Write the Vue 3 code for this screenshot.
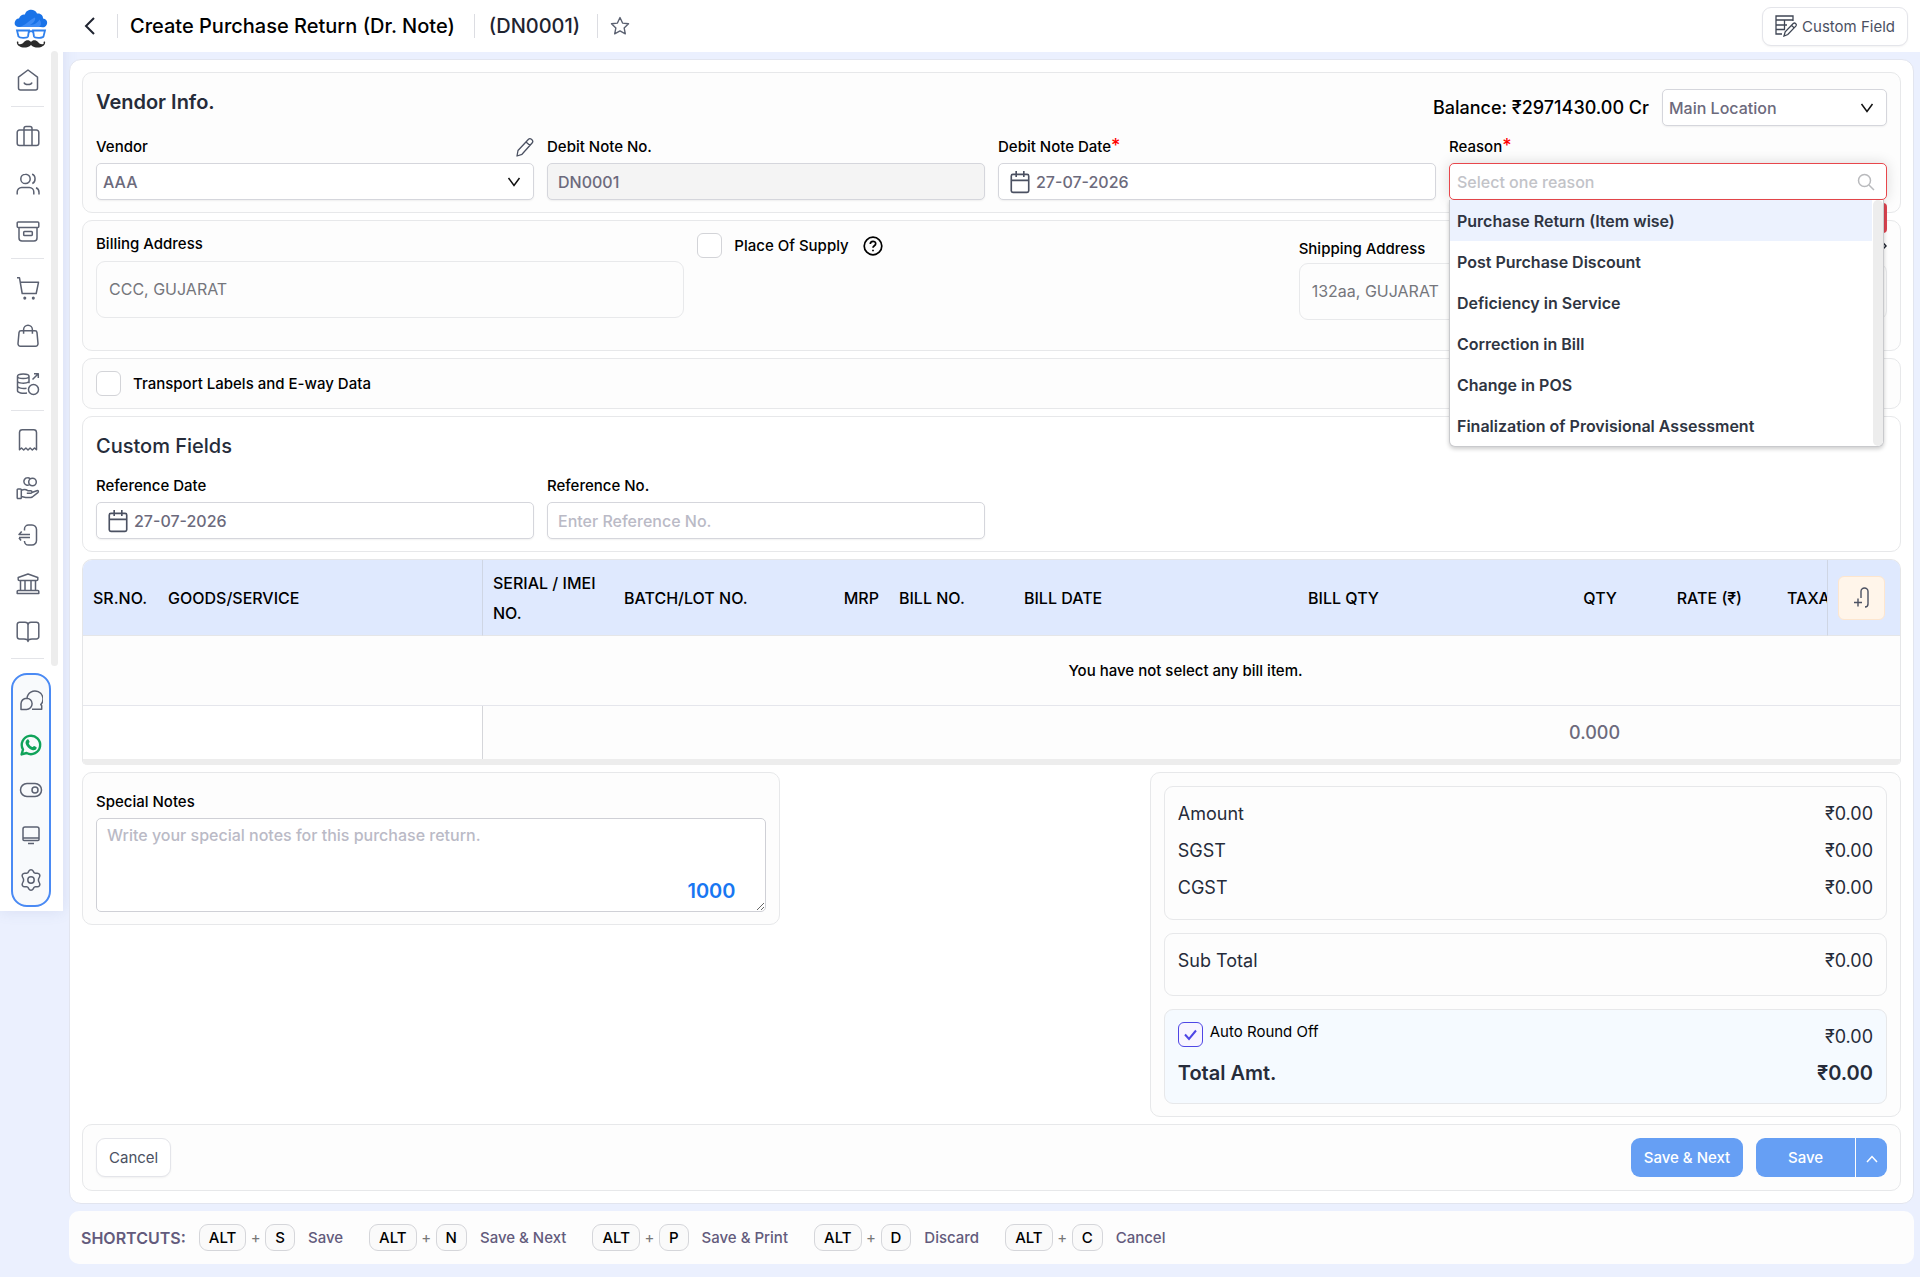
<script setup>
import { ref } from 'vue'

const navGroups = [
  [{ name: 'Home', d: 'M2.5 9.2 12 2l9.5 7.2V20a2 2 0 0 1-2 2h-15a2 2 0 0 1-2-2zM8 14.5c1 2.8 7 2.8 8 0' }],
  [
    { name: 'Products', d: 'M3.5 6h17a2.3 2.3 0 0 1 2.3 2.3v10.9a2.3 2.3 0 0 1-2.3 2.3h-17a2.3 2.3 0 0 1-2.3-2.3V8.3A2.3 2.3 0 0 1 3.5 6zM8 21.5V4.5a2 2 0 0 1 2-2h4a2 2 0 0 1 2 2v17' },
    { name: 'Contacts', d: 'M9.5 2.2a4.7 4.7 0 1 1 0 9.4 4.7 4.7 0 0 1 0-9.4M16 2.3c4 .8 4 8 .3 9.2M1.2 22.5v-2.5a4.5 4.5 0 0 1 4.5-4.5h7.6a4.5 4.5 0 0 1 4.5 4.5v2.5M20 15.8c2 .8 3 2.4 3 4.7v2' },
    { name: 'Inventory', d: 'M2.2 2h19.6a1 1 0 0 1 1 1v3.5a1 1 0 0 1-1 1H2.2a1 1 0 0 1-1-1V3a1 1 0 0 1 1-1zM3 7.5V18a3 3 0 0 0 3 3h12a3 3 0 0 0 3-3V7.5M8.5 11.5h7a.8.8 0 0 1 .8.8v2.4a.8.8 0 0 1-.8.8h-7a.8.8 0 0 1-.8-.8v-2.4a.8.8 0 0 1 .8-.8z' },
  ],
  [
    { name: 'Sales', d: 'M1 1.8h2.5L6.2 17.5h14l2.3-11.2H4.3M8.8 21.3a.8.8 0 1 1 0 1.6.8.8 0 0 1 0-1.6M17.3 21.3a.8.8 0 1 1 0 1.6.8.8 0 0 1 0-1.6' },
    { name: 'Purchases', d: 'M5 6.8h14a2 2 0 0 1 2 1.8l1 10.9a2.5 2.5 0 0 1-2.5 2.7h-15A2.5 2.5 0 0 1 2 19.5L3 8.6a2 2 0 0 1 2-1.8zM7.6 9.8V5.7a4.4 4.4 0 0 1 8.8 0v4.1' },
    { name: 'Payments', d: 'M1.5 4.2C1.5 1.2 13 1.2 13 4.2S1.5 7.2 1.5 4.2zM1.5 4.2v14.6c0 1.9 5 3 9.5 2.2M1.5 9c0 2.4 8 3 11.5.8M1.5 14c0 2 5 2.9 9 2.2M13 4.2v7M17.5 12.5a5 5 0 1 1 0 10 5 5 0 0 1 0-10M16.5 7.5 22 2M18 1.8h4.3V6' },
  ],
  [
    { name: 'Receipts', d: 'M3.5 21.8V4.5A2.8 2.8 0 0 1 6.3 1.8h11.4a2.8 2.8 0 0 1 2.8 2.7v17.3l-2-1.8-2.2 2-2.2-2-2.1 2-2.1-2-2.2 2-2.2-2z' },
    { name: 'Loans', d: 'M11.5 1.8a3.7 3.7 0 1 0 2.8 6.2M11.5 1.8a3.7 3.7 0 0 1 2.7 1M16.5 2.2a3.8 3.8 0 1 1 0 7.6 3.8 3.8 0 0 1 0-7.6M2 13h2.5a.8.8 0 0 1 .8.8v8a.8.8 0 0 1-.8.8H2a.8.8 0 0 1-.8-.8v-8A.8.8 0 0 1 2 13zM5.3 14.5c3-2 5-1 6.5.2h3c1.5 0 1.5 2.6 0 2.6h-4M15.8 16.5l5-1.8c1.5-.4 2.2 1 1 2l-5.5 4.3c-2.5 1.4-6 .6-11-.6' },
    { name: 'Expenses', d: 'M8.5 6.5V5a4 4 0 0 1 4-4h3.5a4.5 4.5 0 0 1 4.5 4.5v11A4.5 4.5 0 0 1 16 21h-3.5a4 4 0 0 1-4-3.5V17M14 10.5H3l2.7-3M3 13.5h11M5 16.5l-2-2.8' },
    { name: 'Banking', d: 'M2.2 7.5V5.5L12 2l9.8 3.5v2a1 1 0 0 1-1 1H3.2a1 1 0 0 1-1-1zM2.2 18.5h19.6a1 1 0 0 1 1 1v2H1.2v-2a1 1 0 0 1 1-1zM4.5 8.5v10M9 8.5v10M15 8.5v10M19.5 8.5v10' },
    { name: 'Reports', d: 'M12 5c0-1.8-1.2-2.8-3-2.8H3.5a2.3 2.3 0 0 0-2.3 2.3v12.3A2.3 2.3 0 0 0 3.5 19H8c2 0 4 .8 4 2.5 0-1.7 2-2.5 4-2.5h4.5a2.3 2.3 0 0 0 2.3-2.3V4.5a2.3 2.3 0 0 0-2.3-2.3H15c-1.8 0-3 1-3 2.8zM12 5v16.5' },
  ],
]
const tools = [
  { name: 'Chat', d: 'M8 10.5a8 8 0 1 1 13.8 6l.9 1.2v3.5H13M7.5 10.2a5.6 5.6 0 1 1 0 11.2H2v-5.6a5.6 5.6 0 0 1 5.5-5.6z' },
  { name: 'WhatsApp', wa: true },
  { name: 'Toggle', d: 'M8.5 5.5h7.5a6.5 6.5 0 0 1 0 13H8a6.5 6.5 0 0 1 0-13zM16 9a3 3 0 1 1 0 6 3 3 0 0 1 0-6' },
  { name: 'Screen', d: 'M6 4h12a2 2 0 0 1 2 2v10.5a1 1 0 0 1-1 1H5a1 1 0 0 1-1-1V6a2 2 0 0 1 2-2zM4 15h16M9 20.5h6' },
  { name: 'Settings', d: 'M12 8.8a3.2 3.2 0 1 1 0 6.4 3.2 3.2 0 0 1 0-6.4M9.8 3.2c1-1.8 3.4-1.8 4.4 0l.8 1.5 1 .5h2.3c2 0 3.2 2 2.2 3.8L19.5 11v2l1 2c1 1.8-.2 3.8-2.2 3.8H16l-1 .5-.8 1.5c-1 1.8-3.4 1.8-4.4 0L9 19.3l-1-.5H5.7c-2 0-3.2-2-2.2-3.8l1-2v-2l-1-2C2.5 7.2 3.7 5.2 5.7 5.2H8l1-.5z' },
]

const reasons = [
  'Purchase Return (Item wise)',
  'Post Purchase Discount',
  'Deficiency in Service',
  'Correction in Bill',
  'Change in POS',
  'Finalization of Provisional Assessment',
]
const taxes = ['Amount', 'SGST', 'CGST']
const shortcuts = [
  { key: 'S', label: 'Save' },
  { key: 'N', label: 'Save & Next' },
  { key: 'P', label: 'Save & Print' },
  { key: 'D', label: 'Discard' },
  { key: 'C', label: 'Cancel' },
]

const noteDate = ref('27-07-2026')
const refDate = ref('27-07-2026')
const refNo = ref('')
const reason = ref('')
const notes = ref('')
const placeOfSupply = ref(false)
const transport = ref(false)
const roundOff = ref(true)
</script>

<template>
  <div class="app">
    <aside class="sidebar">
      <svg class="logo" viewBox="0 0 34 40" aria-label="Logo">
        <path fill="#1a73e8" d="M5 18C1 18 0 15 1 12.5 1.8 10 4 9.5 5 9.5 6 6 9 5 11 5.5 12-.2 21-.8 23 4.5c4-.5 6 2 6 5 4 .5 5 4 3.5 6.5C31.5 18.5 29 18.5 27 18z" />
        <path fill="#3d8bf5" d="M5 18c6-1 9-6 16-9.5 1 3-2 6-5 7.5 5 0 8-3 9.5-5.5C28 14 27 17 25 18z" />
        <path fill="none" stroke="#2f80ed" stroke-width="1.8" d="M3 21.5h12l-1 6c-.5 1.5-8 2-9.5 0zM19 21.5h12l-1.5 6c-1 2-9 1.5-9.5 0zM15 23c1-1 3-1 4 0" />
        <path fill="#2b2b2b" d="M17 33c-1.5-2.5-5-2.5-7 0-2 2.5-5 3-6 1 1-.5.5-2-1-1.5-1.5 5.5 9 8.5 14 3.5 5 5 15.5 2 14-3.5-1.5-.5-2 1-1 1.5-1 2-4 1.5-6-1-2-2.5-5.5-2.5-7 0z" />
      </svg>
      <div class="nav-row">
        <nav class="nav">
          <div v-for="(group, g) in navGroups" :key="g" class="nav-group">
            <a v-for="item in group" :key="item.name" href="#" :aria-label="item.name">
              <svg class="ico" viewBox="0 0 24 24"><path :d="item.d" /></svg>
            </a>
          </div>
        </nav>
        <div class="nav-track"></div>
      </div>
      <div class="tools">
        <a v-for="t in tools" :key="t.name" href="#" :aria-label="t.name">
          <svg v-if="t.wa" class="ico wa" viewBox="0 0 24 24">
            <path stroke-width="2.4" d="M2.6 21.4 4 16.5a9.2 9.2 0 1 1 3.6 3.5z" />
            <path class="solid" d="M8.3 6.5c.5-.3 1.2-.2 1.5.4l.8 1.9c.1.5-.9 1.2-.8 1.6.7 1.6 2 2.9 3.6 3.6.5.2 1.2-1.2 1.8-1l2 1c.6.3.6 1.2 0 2-.8 1.2-2.4 1.5-4.2.9-3-1-5.4-3.3-6.3-6.2-.5-1.7.3-3.6 1.6-4.2z" />
          </svg>
          <svg v-else class="ico" viewBox="0 0 24 24"><path :d="t.d" /></svg>
        </a>
      </div>
    </aside>

    <div class="content">
      <header class="topbar">
        <button class="icon-btn back" aria-label="Back">
          <svg viewBox="0 0 12 18" width="12" height="18"><path d="M10 1 2 9l8 8" fill="none" stroke="#1f2430" stroke-width="2" /></svg>
        </button>
        <h1>Create Purchase Return (Dr. Note)</h1>
        <span class="doc-no">(DN0001)</span>
        <button class="icon-btn star" aria-label="Favourite">
          <svg viewBox="0 0 24 24" width="22" height="22"><path d="m12 2.8 2.8 6 6.5.8-4.8 4.5 1.3 6.5L12 17.4l-5.8 3.2 1.3-6.5-4.800-4.500 6.500-.8z" fill="none" stroke="#5b6171" stroke-width="1.5" stroke-linejoin="round" /></svg>
        </button>
        <button class="btn custom-btn">
          <svg viewBox="0 0 22 22" width="22" height="22" fill="none" stroke="#3f4654" stroke-width="1.3">
            <path d="M7 19H1V1h17v5M1 5h17M1 10h11M1 14.5h9M9.5 5v9.5M9 21l1.2-4.2 8-8.3c1.8-1.3 4 .8 2.6 2.6l-8 8.4zM16.5 10.3l2.6 2.6" />
          </svg>
          Custom Field
        </button>
      </header>

      <main class="page">
        <section class="card vendor">
          <div class="card-head">
            <h2 class="strong">Vendor Info.</h2>
            <div class="head-right">
              <span class="balance">Balance: ₹2971430.00 Cr</span>
              <div class="control location">
                <select aria-label="Location"><option>Main Location</option></select>
                <svg class="chev" viewBox="0 0 14 10"><path d="m1.5 1 5.5 7.5L12.5 1" /></svg>
              </div>
            </div>
          </div>
          <div class="grid4">
            <div class="field">
              <div class="label-row">
                <label for="vendor">Vendor</label>
                <button class="icon-btn" aria-label="Edit vendor">
                  <svg viewBox="0 0 18 20" width="18" height="20" fill="none" stroke="#4b5162" stroke-width="1.3" stroke-linejoin="round"><path d="m1 19 1-5.5L12.5 2.3c1.8-1.8 5.5 1.3 3.8 3.5L6 17.3zM10 5l4 3.5" /></svg>
                </button>
              </div>
              <div class="control">
                <select id="vendor"><option>AAA</option></select>
                <svg class="chev" viewBox="0 0 14 10"><path d="m1.5 1 5.5 7.5L12.5 1" /></svg>
              </div>
            </div>
            <div class="field">
              <div class="label-row"><label for="dn">Debit Note No.</label></div>
              <div class="control disabled"><input id="dn" type="text" value="DN0001" disabled /></div>
            </div>
            <div class="field">
              <div class="label-row"><label for="dndate">Debit Note Date<span class="req">*</span></label></div>
              <div class="control dated">
                <svg class="cal" viewBox="0 0 20 22"><path d="M3.5 4h13A1.5 1.5 0 0 1 18 5.5V19a1.5 1.5 0 0 1-1.5 1.5h-13A1.5 1.5 0 0 1 2 19V5.5A1.5 1.5 0 0 1 3.5 4zM2 9.5h16M6.5 1v5.5M13.5 1v5.5" /></svg>
                <input id="dndate" v-model="noteDate" type="text" />
              </div>
            </div>
            <div class="field reason">
              <div class="label-row"><label for="reason">Reason<span class="req">*</span></label></div>
              <div class="control error">
                <input id="reason" v-model="reason" type="text" placeholder="Select one reason" />
                <svg class="search" viewBox="0 0 18 18"><circle cx="7.5" cy="7.5" r="6" /><path d="m12 12 5 5" /></svg>
              </div>
              <div class="error-tip"></div>
              <div class="dropdown">
                <ul role="listbox">
                  <li v-for="(r, i) in reasons" :key="r" role="option" :class="{ active: i === 0 }">{{ r }}</li>
                </ul>
                <div class="track"></div>
              </div>
            </div>
          </div>
        </section>

        <section class="card address">
          <div class="col">
            <div class="addr-title">Billing Address</div>
            <div class="addr-box">CCC, GUJARAT</div>
          </div>
          <div class="col">
            <label class="check">
              <input v-model="placeOfSupply" type="checkbox" />
              Place Of Supply
              <svg class="help" viewBox="0 0 20 20" width="20" height="20" fill="none" stroke="#000" stroke-width="1.7"><circle cx="10" cy="10" r="8.8" /><path d="M7.3 8c0-3.6 5.4-3.5 5.4-.2 0 2-2.7 2-2.7 4M10 13.7v1.6" /></svg>
            </label>
          </div>
          <div class="col shipping">
            <div class="addr-title">
              Shipping Address
              <svg viewBox="0 0 16 18" width="16" height="18" fill="none" stroke="#1f2430" stroke-width="1.5"><path d="m1 17 1-5 9-9.5 4 4.5L6 16z" /></svg>
            </div>
            <div class="addr-box">132aa, GUJARAT</div>
          </div>
        </section>

        <section class="card transport">
          <label class="check"><input v-model="transport" type="checkbox" />Transport Labels and E-way Data</label>
        </section>

        <section class="card custom">
          <h2>Custom Fields</h2>
          <div class="grid4">
            <div class="field">
              <div class="label-row"><label for="refdate">Reference Date</label></div>
              <div class="control dated">
                <svg class="cal" viewBox="0 0 20 22"><path d="M3.5 4h13A1.5 1.5 0 0 1 18 5.5V19a1.5 1.5 0 0 1-1.5 1.5h-13A1.5 1.5 0 0 1 2 19V5.5A1.5 1.5 0 0 1 3.5 4zM2 9.5h16M6.5 1v5.5M13.5 1v5.5" /></svg>
                <input id="refdate" v-model="refDate" type="text" />
              </div>
            </div>
            <div class="field">
              <div class="label-row"><label for="refno">Reference No.</label></div>
              <div class="control"><input id="refno" v-model="refNo" type="text" placeholder="Enter Reference No." /></div>
            </div>
          </div>
        </section>

        <div class="items">
          <div class="scroller">
            <table>
              <colgroup>
                <col class="w-sr" /><col class="w-goods" /><col class="w-serial" /><col class="w-batch" /><col class="w-mrp" />
                <col class="w-bill" /><col class="w-date" /><col class="w-bqty" /><col class="w-qty" /><col class="w-rate" />
                <col class="w-tax" /><col class="w-add" />
              </colgroup>
              <thead>
                <tr>
                  <th>SR.NO.</th>
                  <th class="edge">GOODS/SERVICE</th>
                  <th>SERIAL / IMEI NO.</th>
                  <th>BATCH/LOT NO.</th>
                  <th class="num">MRP</th>
                  <th>BILL NO.</th>
                  <th>BILL DATE</th>
                  <th class="num">BILL QTY</th>
                  <th class="num">QTY</th>
                  <th class="num">RATE (₹)</th>
                  <th class="tax">TAXABLE</th>
                  <th class="pinned">
                    <button class="add" aria-label="Add column">
                      <svg viewBox="0 0 20 22" width="20" height="22" fill="none" stroke="#4b5162" stroke-width="1.4"><path d="M9 11V4.5a3.5 3.5 0 0 1 7 0V17a3 3 0 0 1-3 3M6 11.5v8M2 15.5h8" /></svg>
                    </button>
                  </th>
                </tr>
              </thead>
              <tbody>
                <tr class="empty"><td colspan="12">You have not select any bill item.</td></tr>
                <tr class="sum">
                  <td colspan="2" class="fixed"></td>
                  <td colspan="7" class="num">0.000</td>
                  <td colspan="3"></td>
                </tr>
              </tbody>
            </table>
          </div>
          <div class="items-track"></div>
        </div>

        <div class="bottom">
          <section class="card notes">
            <div class="label-row"><label for="notes">Special Notes</label></div>
            <div class="notes-box">
              <textarea id="notes" v-model="notes" placeholder="Write your special notes for this purchase return."></textarea>
              <span class="counter">1000</span>
            </div>
          </section>
          <section class="card totals">
            <div class="box">
              <div v-for="t in taxes" :key="t" class="line"><span>{{ t }}</span><span>₹0.00</span></div>
            </div>
            <div class="box">
              <div class="line"><span>Sub Total</span><span>₹0.00</span></div>
            </div>
            <div class="box grand">
              <div class="line">
                <label class="check small"><input v-model="roundOff" type="checkbox" /><span>Auto Round Off</span></label>
                <span>₹0.00</span>
              </div>
              <div class="line total"><span>Total Amt.</span><span>₹0.00</span></div>
            </div>
          </section>
        </div>

        <section class="card actions">
          <button class="btn">Cancel</button>
          <div class="save-group">
            <button class="primary next">Save &amp; Next</button>
            <div class="split">
              <button class="primary save">Save</button>
              <button class="primary more" aria-label="More save options">
                <svg viewBox="0 0 12 8" width="12" height="8"><path d="m1 7 5-5.5L11 7" fill="none" stroke="#fff" stroke-width="1.5" /></svg>
              </button>
            </div>
          </div>
        </section>
      </main>

      <footer class="shortcuts">
        <span class="sc-title">SHORTCUTS:</span>
        <div v-for="s in shortcuts" :key="s.key" class="sc">
          <kbd>ALT</kbd><span class="plus">+</span><kbd>{{ s.key }}</kbd><span class="sc-label">{{ s.label }}</span>
        </div>
      </footer>
    </div>
  </div>
</template>

<style>
body {
  background: #ebf0fe;
}
</style>

<style scoped>
* {
  box-sizing: border-box;
}
.app {
  display: flex;
  align-items: flex-start;
  font-family: Inter, "Liberation Sans", sans-serif;
  font-weight: 500;
  font-size: 15px;
  color: #000;
}
button,
input,
select,
textarea {
  font: inherit;
  color: inherit;
}
button {
  cursor: pointer;
}
h1,
h2,
ul {
  margin: 0;
  padding: 0;
}

/* Sidebar */
.sidebar {
  flex: 0 0 63px;
  padding: 9px 0 4px 11px;
  background: #fff;
  box-shadow: 0 0 14px rgba(90, 110, 170, 0.14);
}
.logo {
  display: block;
  width: 34px;
  height: 40px;
  margin-left: 3px;
}
.nav-row {
  display: flex;
  gap: 7px;
  margin-top: 2px;
}
.nav {
  width: 33px;
}
.nav-group {
  padding: 5px 0 2px;
  border-bottom: 1px solid #e3e4e8;
}
.nav-group a,
.tools a {
  display: flex;
  align-items: center;
  justify-content: center;
  height: 48px;
}
.nav-track {
  width: 7px;
  height: 615px;
  border-radius: 4px;
  background: #ededed;
}
.ico {
  width: 24px;
  height: 24px;
  fill: none;
  stroke: #5b6171;
  stroke-width: 1.5;
  stroke-linejoin: round;
}
.wa {
  stroke: #10a35a;
}
.wa .solid {
  fill: #10a35a;
  stroke: none;
}
.tools {
  display: grid;
  gap: 1px;
  width: 40px;
  margin-top: 7px;
  padding: 3px 0;
  border: 2px solid #4a8af4;
  border-radius: 16px;
  background: #f8fafc;
}
.tools a {
  height: 44px;
}

/* Top bar */
.content {
  flex: 1;
  min-width: 0;
}
.topbar {
  display: flex;
  align-items: center;
  height: 52px;
  padding: 0 12px 0 17px;
  background: #fff;
}
.icon-btn {
  display: flex;
  align-items: center;
  padding: 0;
  border: 0;
  background: none;
}
.back {
  width: 37px;
  padding-left: 4px;
}
h1,
.doc-no {
  padding: 0 19px 0 12px;
  border-left: 1px solid #dcdde2;
  font-size: 20px;
  line-height: 24px;
  font-weight: 500;
}
.doc-no {
  padding: 0 17px 0 14px;
  color: #1f2430;
  border-right: 1px solid #dcdde2;
}
.star {
  padding-left: 11px;
}
.btn {
  display: flex;
  align-items: center;
  gap: 5px;
  height: 39px;
  padding: 0 12px;
  border: 1px solid #e4e5ea;
  border-radius: 9px;
  background: #fff;
  color: #4b5162;
  font-weight: 400;
  font-size: 15px;
  box-shadow: 0 1px 2px rgba(0, 0, 0, 0.05);
}
.custom-btn {
  margin-left: auto;
}

/* Cards */
.page {
  display: flex;
  flex-direction: column;
  gap: 7px;
  margin: 7px 6px;
  padding: 12px;
  border: 1px solid #e2e5ef;
  border-radius: 12px;
  background: #fff;
}
.card {
  padding: 13px 13px 12px;
  border: 1px solid #e7e8ea;
  border-radius: 10px;
  background: #fdfdfd;
}
h2 {
  font-size: 20px;
  line-height: 26px;
  font-weight: 500;
  color: #262c3a;
}
h2.strong {
  font-weight: 600;
}
.card.vendor,
.card.custom {
  padding-top: 16px;
}
.card-head {
  display: flex;
  justify-content: space-between;
  margin-bottom: 2px;
}
.head-right {
  display: flex;
  align-items: center;
  gap: 13px;
}
.balance {
  font-size: 18px;
}
.location {
  width: 225px;
}
.grid4 {
  display: grid;
  grid-template-columns: repeat(4, minmax(0, 1fr));
  gap: 13px;
}
.label-row {
  display: flex;
  align-items: center;
  justify-content: space-between;
  height: 35px;
}
.field .label-row {
  padding-top: 2px;
}
.req {
  color: #f00;
  font-size: 18px;
  line-height: 15px;
}
.control {
  position: relative;
  display: flex;
  align-items: center;
  height: 37px;
  border: 1px solid #d5d6dc;
  border-radius: 5px;
  background: #fff;
  box-shadow: 0 1px 2px rgba(0, 0, 0, 0.06);
  color: #6c6a7c;
  font-size: 16px;
}
.control select,
.control input {
  flex: 1;
  min-width: 0;
  height: 100%;
  padding: 0 10px;
  border: 0;
  outline: 0;
  background: none;
  appearance: none;
}
.control select {
  padding: 0 6px;
}
.control.dated input {
  padding-left: 5px;
}
::placeholder {
  color: #babac6;
  opacity: 1;
}
.control.disabled {
  background: #f4f4f4;
}
.chev {
  position: absolute;
  right: 12px;
  width: 14px;
  height: 10px;
  fill: none;
  stroke: #111;
  stroke-width: 1.5;
  pointer-events: none;
}
.cal {
  width: 22px;
  height: 24px;
  margin-left: 10px;
  fill: none;
  stroke: #4b5162;
  stroke-width: 1.5;
}
.reason {
  position: relative;
  z-index: 2;
}
.control.error {
  border-color: #e8474c;
  box-shadow: 0 0 14px rgba(0, 0, 0, 0.14);
}
.control.error input {
  padding-left: 7px;
}
.error ::placeholder {
  color: #c2c3c8;
}
.search {
  width: 18px;
  height: 18px;
  margin-right: 11px;
  fill: none;
  stroke: #b9babd;
  stroke-width: 1.5;
}
.error-tip {
  position: absolute;
  top: 75px;
  right: 0;
  width: 180px;
  height: 30px;
  border-radius: 4px;
  background: #dc4450;
}
.dropdown {
  position: absolute;
  top: 72px;
  left: 0;
  right: 3px;
  display: flex;
  border: 1px solid #c9cacd;
  border-top: 0;
  border-radius: 0 0 6px 6px;
  background: #fff;
  box-shadow: 0 2px 4px rgba(0, 0, 0, 0.2);
  overflow: hidden;
}
.dropdown ul {
  flex: 1;
  list-style: none;
}
.dropdown li {
  height: 41px;
  padding-left: 7px;
  font-size: 16px;
  line-height: 43px;
  font-weight: 600;
  color: #2f3542;
  white-space: nowrap;
}
.dropdown .active {
  background: #ecf2fe;
}
.track {
  width: 10px;
  margin-left: 1px;
  border-radius: 5px;
  background: #ededed;
}

/* Addresses */
.card.address {
  display: grid;
  grid-template-columns: repeat(3, minmax(0, 1fr));
  gap: 13px;
  padding: 12px 13px 30px;
}
.addr-title {
  display: flex;
  justify-content: space-between;
  align-items: center;
  height: 21px;
  margin-bottom: 7px;
}
.shipping .addr-title {
  height: 30px;
  margin-bottom: 0;
}
.addr-box {
  padding: 0 12px;
  border: 1px solid #e8e9eb;
  border-radius: 9px;
  font-size: 16px;
  line-height: 55px;
  font-weight: 400;
  color: #75767c;
}
.check {
  display: flex;
  align-items: center;
  gap: 12px;
}
.help {
  margin-left: 2px;
}
.check input {
  appearance: none;
  width: 25px;
  height: 25px;
  margin: 0;
  border: 1px solid #d3d4d8;
  border-radius: 6px;
  background: #fff center / 17px no-repeat;
}
.check input:checked {
  border-color: #4f46e5;
  background-color: #f8f5ff;
  background-image: url("data:image/svg+xml,%3Csvg xmlns='http://www.w3.org/2000/svg' viewBox='0 0 17 17'%3E%3Cpath d='m3 8.5 4 4.5 7-8.5' fill='none' stroke='%234f46e5' stroke-width='2'/%3E%3C/svg%3E");
}
.card.transport {
  padding: 12px 13px;
}
.card.custom {
  background: #fff;
}
.custom h2 {
  margin-bottom: 8px;
}

/* Item table */
.items {
  border: 1px solid #e5e6e8;
  border-bottom: 0;
  border-radius: 10px 10px 5px 5px;
  background: #fdfdfd;
  overflow: hidden;
}
.scroller {
  overflow: hidden;
}
table {
  width: 2205px;
  table-layout: fixed;
  border-collapse: separate;
  border-spacing: 0;
}
.w-sr { width: 75px; }
.w-goods { width: 325px; }
.w-serial { width: 131px; }
.w-batch { width: 176px; }
.w-mrp { width: 99px; }
.w-bill { width: 125px; }
.w-date { width: 186px; }
.w-bqty { width: 189px; }
.w-qty { width: 238px; }
.w-rate { width: 125px; }
.w-add { width: 73px; }
th {
  height: 76px;
  padding: 0 10px;
  border-bottom: 1px solid #e5e6e8;
  background: #dfe9fe;
  font-size: 16px;
  line-height: 30px;
  font-weight: 500;
  text-align: left;
}
th.edge {
  border-right: 1px solid #cfd6e4;
}
.num {
  text-align: right;
}
th.tax {
  padding-left: 35px;
}
.pinned {
  position: sticky;
  right: 0;
  border-left: 1px solid #cfd6e4;
}
.add {
  display: flex;
  align-items: center;
  justify-content: center;
  width: 47px;
  height: 44px;
  padding: 0;
  border: 1px solid #fde6cf;
  border-radius: 6px;
  background: #fff5ea;
}
td {
  padding: 0 7px;
}
.empty td {
  height: 70px;
  border-bottom: 1px solid #e5e6ec;
  text-align: center;
}
.sum td {
  height: 53px;
  font-size: 18px;
  color: #6c6a7c;
}
.sum .fixed {
  position: sticky;
  left: 0;
  border-right: 1px solid #d5d6da;
  background: #fff;
}
.items-track {
  height: 6px;
  background: #ededed;
}

/* Notes and totals */
.bottom {
  display: flex;
  align-items: flex-start;
  justify-content: space-between;
}
.notes {
  width: 38.4%;
}
.notes-box {
  position: relative;
}
.notes .label-row {
  height: 32px;
  padding-bottom: 2px;
}
textarea {
  display: block;
  width: 100%;
  height: 94px;
  padding: 6px 10px;
  border: 1px solid #cfd0d6;
  border-radius: 5px;
  background: #fff;
  outline: 0;
  font-size: 16px;
  line-height: 20px;
}
.counter {
  position: absolute;
  right: 31px;
  bottom: 9px;
  font-size: 20px;
  line-height: 24px;
  font-weight: 600;
  color: #1877f2;
}
.totals {
  display: grid;
  gap: 13px;
  width: 41.3%;
}
.box {
  min-height: 63px;
  padding: 8px 13px 13px;
  border: 1px solid #e7e8ea;
  border-radius: 9px;
}
.line {
  display: flex;
  justify-content: space-between;
  font-size: 18px;
  line-height: 37px;
  font-weight: 400;
  color: #262c3a;
}
.grand {
  padding-bottom: 11px;
  background: #f5faff;
}
.total {
  font-size: 20px;
  font-weight: 600;
}
.check.small {
  align-items: flex-start;
  gap: 7px;
  font-size: 15px;
  line-height: 25px;
  color: #000;
}
.check.small input {
  margin-top: 4px;
}
.check.small span {
  margin-top: 1px;
}

/* Actions */
.card.actions {
  display: flex;
  justify-content: space-between;
  padding: 13px;
}
.save-group {
  display: flex;
  gap: 13px;
}
.split {
  display: flex;
  gap: 1px;
}
.primary {
  height: 39px;
  padding: 0;
  border: 0;
  border-radius: 9px;
  background: #669ff4;
  color: #fff;
}
.next {
  width: 112px;
}
.save {
  width: 99px;
  border-radius: 9px 0 0 9px;
}
.more {
  width: 31px;
  border-radius: 0 9px 9px 0;
}

/* Shortcuts */
.shortcuts {
  display: flex;
  align-items: center;
  height: 53px;
  margin: 0 6px 13px;
  padding: 0 12px;
  border-radius: 10px;
  background: #fdfdfd;
  color: #635b7c;
}
.sc-title {
  margin-right: 13px;
  font-size: 16px;
  font-weight: 600;
}
.sc {
  display: flex;
  align-items: center;
  margin-right: 26px;
}
kbd {
  padding: 0 9px;
  border: 1px solid #d5d6da;
  border-radius: 9px;
  background: #fafafa;
  color: #000;
  font-family: inherit;
  font-size: 15px;
  line-height: 25px;
}
.plus {
  width: 19px;
  text-align: center;
  font-weight: 400;
  color: #777;
}
.sc-label {
  margin-left: 13px;
}
</style>
